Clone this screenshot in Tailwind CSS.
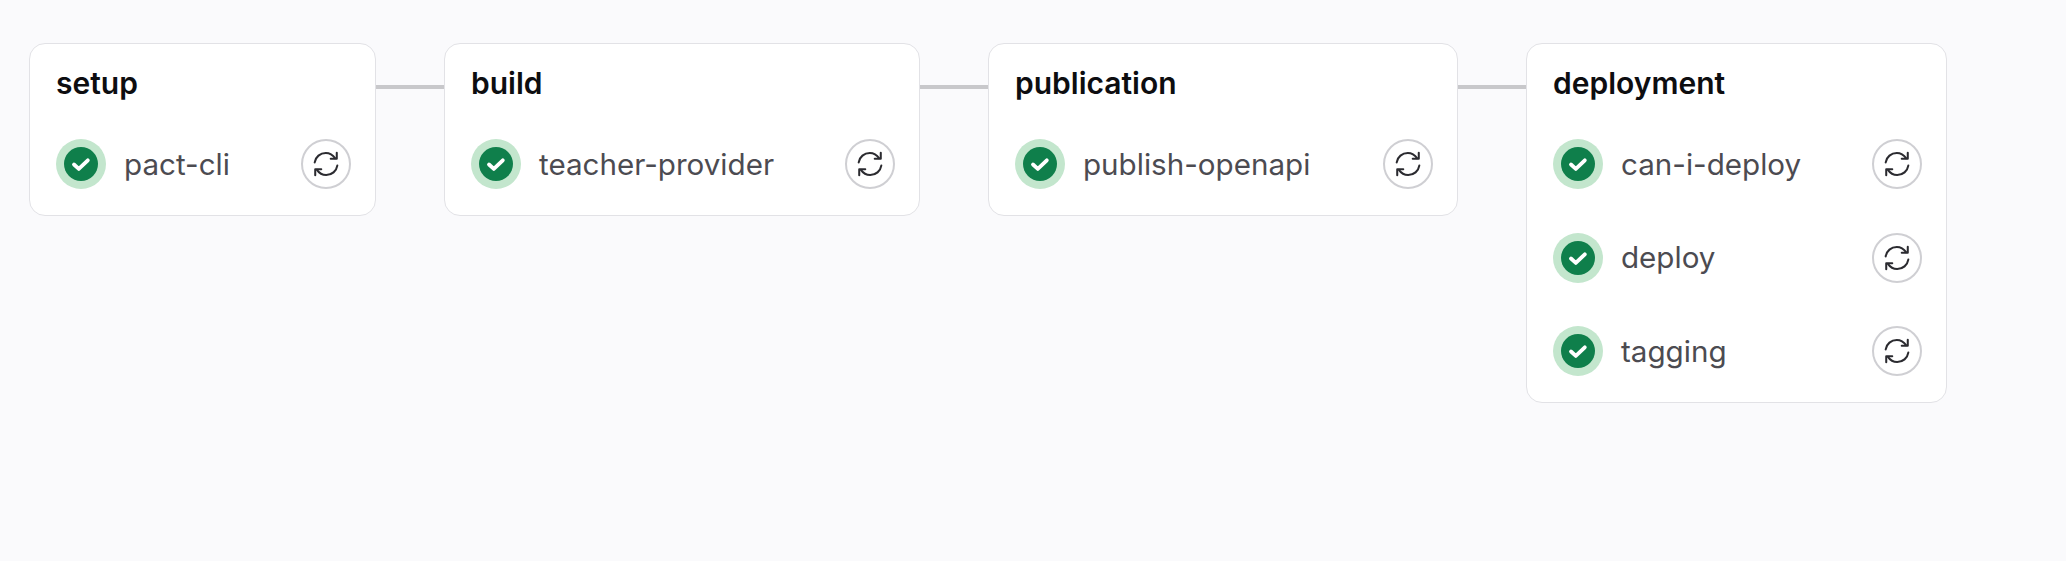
<!DOCTYPE html>
<html><head><meta charset="utf-8"><script src="https://cdn.jsdelivr.net/npm/@tailwindcss/browser@4"></script></head>
<body class="bg-[#fafafc] font-['Inter',sans-serif] w-[2066px] h-[561px] overflow-hidden">
<svg class="hidden"><defs>
<symbol id="ok" viewBox="0 0 34 34"><circle cx="17" cy="17" r="17" fill="#0f7f4b"/><path d="M10 17.5l4.8 4.4 9-8.6" fill="none" stroke="#fff" stroke-width="3.8" stroke-linecap="round" stroke-linejoin="round"/></symbol>
<symbol id="re" viewBox="0 0 26 26"><g fill="none" stroke="#2b2b30" stroke-width="1.9" stroke-linecap="round" stroke-linejoin="round"><path d="M2.5 11.5C3.3 6.4 7.6 2.8 12.8 2.8c3.6 0 6.6 1.8 8.6 4.8"/><path d="M23 2.6v5.6h-5.6"/><path d="M23.5 14.5c-.8 5.1-5.1 8.7-10.3 8.7-3.6 0-6.6-1.8-8.6-4.8"/><path d="M3 23.4v-5.6h5.6"/></g></symbol>
</defs></svg>
<main class="flex items-start pt-[43px] pl-[29px]">
 <section class="w-[347px] h-[173px] bg-white border border-[#e2e2e6] rounded-2xl pt-[21px] pl-[26px] pr-[24px] shrink-0">
  <h2 class="text-[30px] leading-[36px] font-semibold text-[#0d0d10]">setup</h2>
  <div class="mt-[38px] flex items-center h-[50px]"><span class="size-[50px] rounded-full bg-[#c3e6cd] flex items-center justify-center"><svg class="size-[34px]"><use href="#ok"/></svg></span><span class="ml-[18px] text-[29.6px] text-[#4c4b51]">pact-cli</span><button class="ml-auto size-[50px] rounded-full border-2 border-[#cfcfd3] flex items-center justify-center"><svg class="size-[28px]"><use href="#re"/></svg></button></div>
 </section>
 <div class="w-[68px] h-[4px] mt-[42px] bg-[#c8c8cb] shrink-0"></div>
 <section class="w-[476px] h-[173px] bg-white border border-[#e2e2e6] rounded-2xl pt-[21px] pl-[26px] pr-[24px] shrink-0">
  <h2 class="text-[30px] leading-[36px] font-semibold text-[#0d0d10]">build</h2>
  <div class="mt-[38px] flex items-center h-[50px]"><span class="size-[50px] rounded-full bg-[#c3e6cd] flex items-center justify-center"><svg class="size-[34px]"><use href="#ok"/></svg></span><span class="ml-[18px] text-[29.6px] text-[#4c4b51]">teacher-provider</span><button class="ml-auto size-[50px] rounded-full border-2 border-[#cfcfd3] flex items-center justify-center"><svg class="size-[28px]"><use href="#re"/></svg></button></div>
 </section>
 <div class="w-[68px] h-[4px] mt-[42px] bg-[#c8c8cb] shrink-0"></div>
 <section class="w-[470px] h-[173px] bg-white border border-[#e2e2e6] rounded-2xl pt-[21px] pl-[26px] pr-[24px] shrink-0">
  <h2 class="text-[30px] leading-[36px] font-semibold text-[#0d0d10]">publication</h2>
  <div class="mt-[38px] flex items-center h-[50px]"><span class="size-[50px] rounded-full bg-[#c3e6cd] flex items-center justify-center"><svg class="size-[34px]"><use href="#ok"/></svg></span><span class="ml-[18px] text-[29.6px] text-[#4c4b51]">publish-openapi</span><button class="ml-auto size-[50px] rounded-full border-2 border-[#cfcfd3] flex items-center justify-center"><svg class="size-[28px]"><use href="#re"/></svg></button></div>
 </section>
 <div class="w-[68px] h-[4px] mt-[42px] bg-[#c8c8cb] shrink-0"></div>
 <section class="w-[421px] h-[360px] bg-white border border-[#e2e2e6] rounded-2xl pt-[21px] pl-[26px] pr-[24px] shrink-0">
  <h2 class="text-[30px] leading-[36px] font-semibold text-[#0d0d10]">deployment</h2>
  <div class="mt-[38px] flex flex-col gap-[43.5px]">
  <div class="flex items-center h-[50px]"><span class="size-[50px] rounded-full bg-[#c3e6cd] flex items-center justify-center"><svg class="size-[34px]"><use href="#ok"/></svg></span><span class="ml-[18px] text-[29.6px] text-[#4c4b51]">can-i-deploy</span><button class="ml-auto size-[50px] rounded-full border-2 border-[#cfcfd3] flex items-center justify-center"><svg class="size-[28px]"><use href="#re"/></svg></button></div>
  <div class="flex items-center h-[50px]"><span class="size-[50px] rounded-full bg-[#c3e6cd] flex items-center justify-center"><svg class="size-[34px]"><use href="#ok"/></svg></span><span class="ml-[18px] text-[29.6px] text-[#4c4b51]">deploy</span><button class="ml-auto size-[50px] rounded-full border-2 border-[#cfcfd3] flex items-center justify-center"><svg class="size-[28px]"><use href="#re"/></svg></button></div>
  <div class="flex items-center h-[50px]"><span class="size-[50px] rounded-full bg-[#c3e6cd] flex items-center justify-center"><svg class="size-[34px]"><use href="#ok"/></svg></span><span class="ml-[18px] text-[29.6px] text-[#4c4b51]">tagging</span><button class="ml-auto size-[50px] rounded-full border-2 border-[#cfcfd3] flex items-center justify-center"><svg class="size-[28px]"><use href="#re"/></svg></button></div>
  </div>
 </section>
</main>
</body></html>
